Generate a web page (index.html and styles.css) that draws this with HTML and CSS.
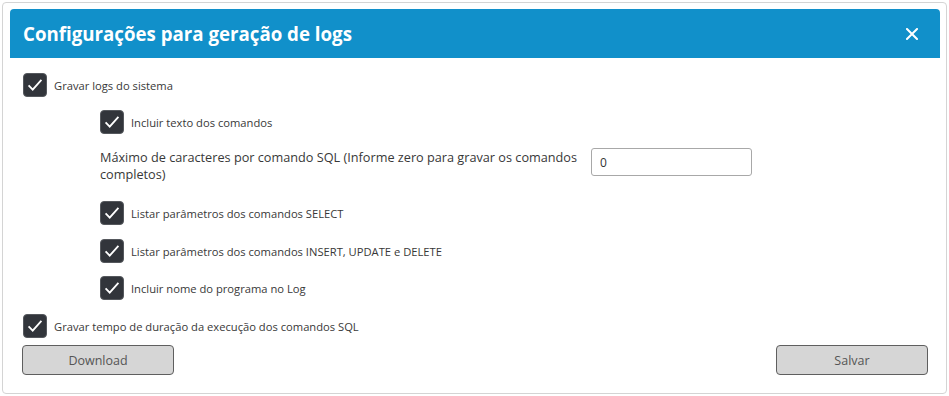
FILE: index.html
```html
<!DOCTYPE html>
<html lang="pt">
<head>
<meta charset="utf-8">
<link rel="stylesheet" href="styles.css">
</head>
<body>
<div class="panel">
  <div class="header">
    <h1 class="title">Configurações para geração de logs</h1>
    <svg class="close" width="12" height="12" viewBox="0 0 12 12"><path d="M1 1 L11 11 M11 1 L1 11" stroke="#fff" stroke-width="2" stroke-linecap="square"/></svg>
  </div>
  <div class="body">
    <label class="check r1"><span class="box"><svg width="24" height="24" viewBox="0 0 24 24"><path d="M5 12.5 L9.5 17 L19 6.5" fill="none" stroke="#fff" stroke-width="2"/></svg></span><span class="lbl">Gravar logs do sistema</span></label>
    <div class="nested">
      <label class="check r2"><span class="box"><svg width="24" height="24" viewBox="0 0 24 24"><path d="M5 12.5 L9.5 17 L19 6.5" fill="none" stroke="#fff" stroke-width="2"/></svg></span><span class="lbl">Incluir texto dos comandos</span></label>
      <div class="field">
        <span class="field-lbl">Máximo de caracteres por comando SQL (Informe zero para gravar os comandos completos)</span>
        <input class="input" type="text" value="0">
      </div>
      <label class="check r3"><span class="box"><svg width="24" height="24" viewBox="0 0 24 24"><path d="M5 12.5 L9.5 17 L19 6.5" fill="none" stroke="#fff" stroke-width="2"/></svg></span><span class="lbl">Listar parâmetros dos comandos SELECT</span></label>
      <label class="check r4"><span class="box"><svg width="24" height="24" viewBox="0 0 24 24"><path d="M5 12.5 L9.5 17 L19 6.5" fill="none" stroke="#fff" stroke-width="2"/></svg></span><span class="lbl">Listar parâmetros dos comandos INSERT, UPDATE e DELETE</span></label>
      <label class="check r5"><span class="box"><svg width="24" height="24" viewBox="0 0 24 24"><path d="M5 12.5 L9.5 17 L19 6.5" fill="none" stroke="#fff" stroke-width="2"/></svg></span><span class="lbl">Incluir nome do programa no Log</span></label>
    </div>
    <label class="check r6"><span class="box"><svg width="24" height="24" viewBox="0 0 24 24"><path d="M5 12.5 L9.5 17 L19 6.5" fill="none" stroke="#fff" stroke-width="2"/></svg></span><span class="lbl">Gravar tempo de duração da execução dos comandos SQL</span></label>
    <div class="actions">
      <button class="btn">Download</button>
      <button class="btn">Salvar</button>
    </div>
  </div>
</div>
</body>
</html>
```

FILE: styles.css
```css
* { box-sizing: border-box; }
html, body { margin: 0; padding: 0; background: #fff; }
body {
  font-family: "Open Sans", "Noto Sans", sans-serif;
  color: #3a3a3a;
  width: 949px;
  height: 396px;
  overflow: hidden;
}
.panel {
  margin: 2px 2px 0 2px;
  height: 392px;
  border: 1px solid #d4d4d4;
  border-radius: 4px;
  padding: 6px 6px 0 7px;
}
.header {
  height: 49px;
  background: #1190ca;
  border-radius: 4px 4px 0 0;
  display: flex;
  align-items: center;
  justify-content: space-between;
  padding: 0 22px 0 13px;
}
.title {
  margin: 0;
  color: #fff;
  font-size: 18.7px;
  font-weight: 700;
  letter-spacing: 0;
}
.close { display: block; }
.body {
  padding: 0 12px;
  display: flex;
  flex-direction: column;
}
.check {
  display: flex;
  align-items: center;
  height: 24px;
}
.box {
  width: 24px;
  height: 24px;
  border-radius: 4px;
  background: #32353b;
  border: 1px solid #55585d;
  display: flex;
  align-items: center;
  justify-content: center;
  flex: none;
}
.box svg { display: block; }
.lbl {
  margin-left: 7px;
  font-size: 11.2px;
  color: #383838;
}
.r1 { margin: 15px 0 0 1px; }
.nested {
  padding-left: 78px;
  display: flex;
  flex-direction: column;
}
.r2 { margin-top: 13px; }
.field {
  display: flex;
  align-items: flex-start;
  margin-top: 14px;
}
.field-lbl {
  width: 482px;
  font-size: 12.7px;
  line-height: 17px;
  color: #383838;
  padding-top: 1px;
}
.input {
  margin-left: 9px;
  width: 161px;
  height: 28px;
  border: 1px solid #a8a8a8;
  border-radius: 3px;
  padding: 0 8px;
  font-family: inherit;
  font-size: 12px;
  color: #333;
  margin-top: 0;
}
.r3 { margin-top: 18px; }
.r4 { margin-top: 14px; }
.r5 { margin-top: 13px; }
.r6 { margin: 14px 0 0 1px; }
.actions {
  display: flex;
  justify-content: space-between;
  margin-top: 7px;
}
.btn {
  width: 152px;
  height: 30px;
  background: #d6d6d6;
  border: 1px solid #5f5f5f;
  border-radius: 4px;
  font-family: inherit;
  font-size: 12.5px;
  color: #555;
  padding: 0;
}
```
